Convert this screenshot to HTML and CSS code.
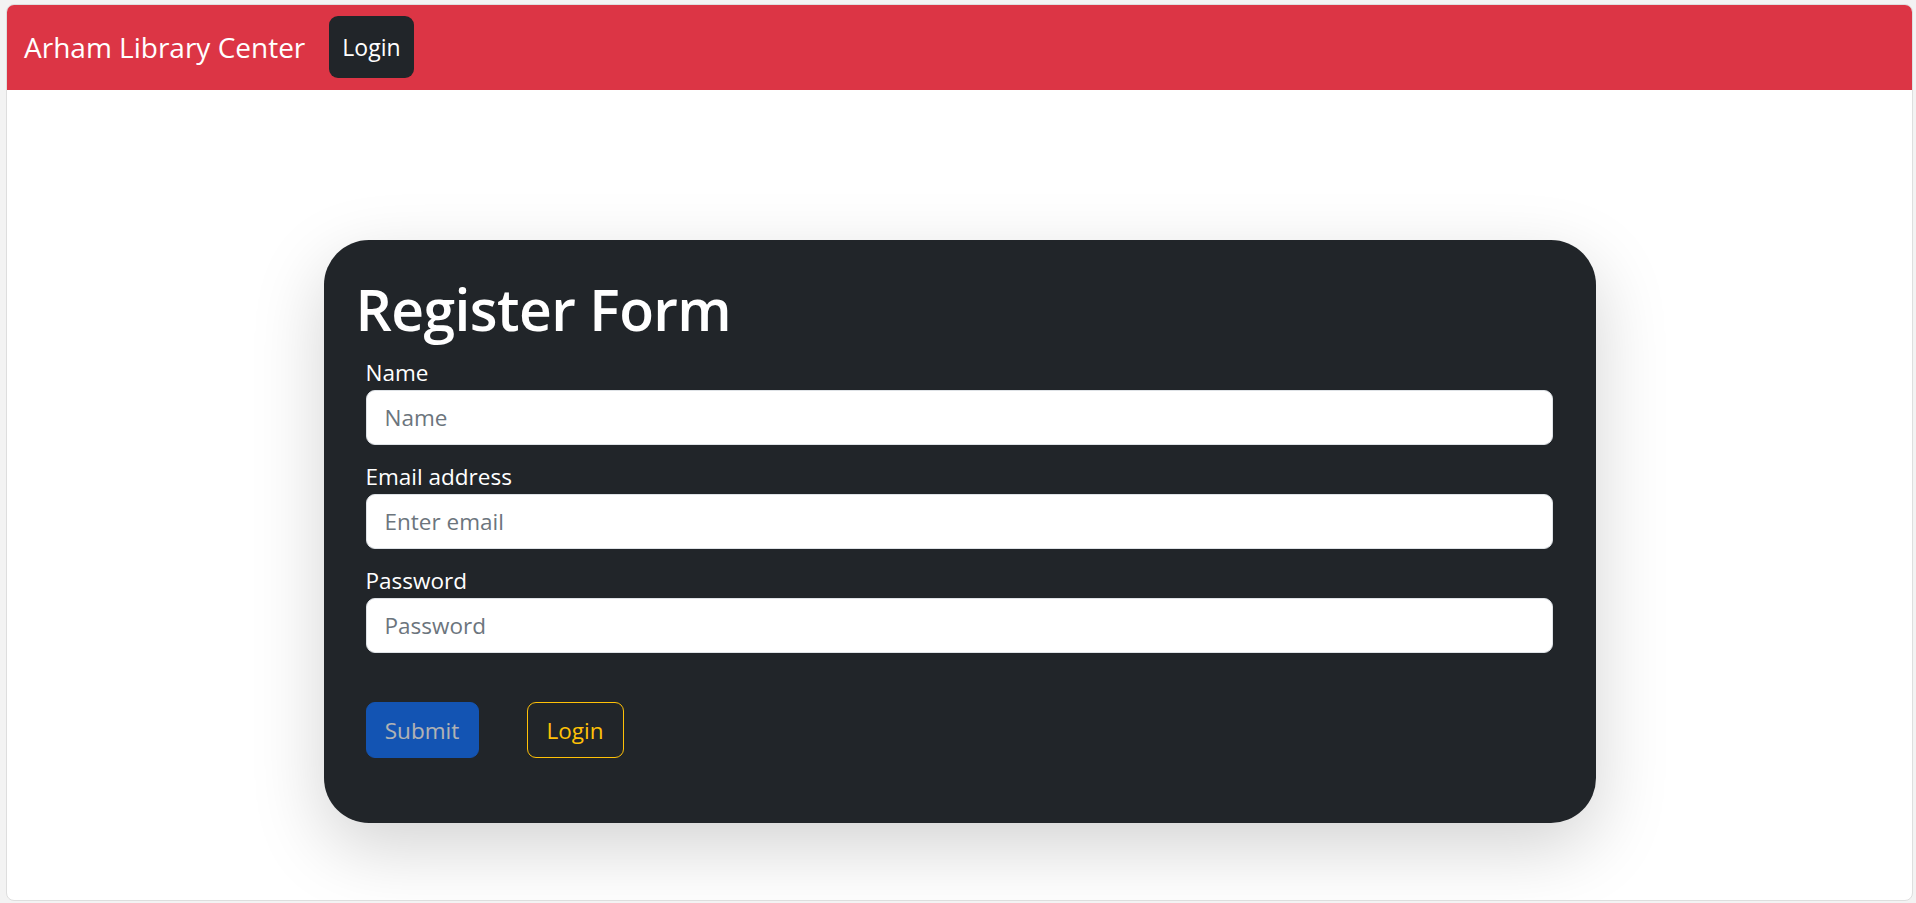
FILE: index.html
```html
<!DOCTYPE html>
<html lang="en">
<head>
<meta charset="utf-8">
<title>Arham Library Center</title>
<link rel="stylesheet" href="styles.css">
</head>
<body>
<div class="window">
  <nav class="navbar">
    <span class="brand">Arham Library Center</span>
    <a class="nav-btn" href="#">Login</a>
  </nav>
  <main class="main">
    <section class="card">
      <h1 class="title">Register Form</h1>
      <form class="form">
        <div class="group">
          <label class="label" for="name">Name</label>
          <input class="input" id="name" type="text" placeholder="Name">
        </div>
        <div class="group">
          <label class="label" for="email">Email address</label>
          <input class="input" id="email" type="email" placeholder="Enter email">
        </div>
        <div class="group">
          <label class="label" for="pw">Password</label>
          <input class="input" id="pw" type="password" placeholder="Password">
        </div>
        <div class="actions">
          <button class="btn btn-primary" type="submit" disabled>Submit</button>
          <button class="btn btn-outline" type="button">Login</button>
        </div>
      </form>
    </section>
  </main>
</div>
</body>
</html>
```
FILE: styles.css
```css
* { box-sizing: border-box; }
html, body { margin: 0; height: 100%; }
body {
  background: #f3f3f3;
  padding: 4px 3px 2px 6px;
  font-family: "Open Sans", "Noto Sans", sans-serif;
}
.window {
  height: 897px;
  background: #fff;
  border: 1px solid #dedede;
  border-radius: 8px;
  overflow: hidden;
  display: flex;
  flex-direction: column;
}
.navbar {
  height: 86px;
  flex: none;
  background: #dc3545;
  display: flex;
  align-items: center;
  padding: 0 0 0 17px;
  margin-top: -1px;
}
.brand {
  color: #fff;
  font-size: 28px;
  line-height: 1;
  margin-right: 24px;
}
.nav-btn {
  display: inline-flex;
  align-items: center;
  justify-content: center;
  height: 62px;
  padding: 0 13px;
  background: #212529;
  color: #fff;
  border-radius: 9px;
  font-size: 23px;
  text-decoration: none;
}
.main {
  flex: 1;
  display: flex;
  justify-content: center;
  padding-top: 150px;
}
.card {
  width: 1272px;
  height: 583px;
  background: #212529;
  border-radius: 45px;
  box-shadow: 0 24px 72px rgba(0,0,0,.175);
  padding: 32px 30px 0 30px;
  color: #fff;
}
.title {
  margin: 0 0 10px 0;
  height: 72px;
  line-height: 74px;
  font-size: 57px;
  font-weight: 600;
  letter-spacing: -0.6px;
  padding-left: 2px;
}
.form {
  padding: 0 13px 0 12px;
}
.group {
  margin-bottom: 13px;
}
.group:nth-child(3) { margin-bottom: 49px; }
.label {
  display: block;
  height: 36px;
  line-height: 37px;
  font-size: 22.5px;
  color: #fff;
}
.input {
  display: block;
  width: 100%;
  height: 55px;
  border: 1.5px solid #dee2e6;
  border-radius: 9px;
  padding: 0 18px;
  font-family: inherit;
  font-size: 22.5px;
  color: #212529;
  background: #fff;
  outline: none;
}
.input::placeholder { color: #6c757d; }
.actions {
  display: flex;
  gap: 48px;
}
.btn {
  height: 56px;
  border-radius: 9px;
  font-family: inherit;
  font-size: 22.5px;
  padding: 0 18px;
  display: inline-flex;
  align-items: center;
  justify-content: center;
}
.btn-primary {
  width: 113px;
  background: #0d6efd;
  border: 1.5px solid #0d6efd;
  color: #fff;
  opacity: .65;
}
.btn-outline {
  width: 97px;
  background: transparent;
  border: 1.5px solid #ffc107;
  color: #ffc107;
}
```
